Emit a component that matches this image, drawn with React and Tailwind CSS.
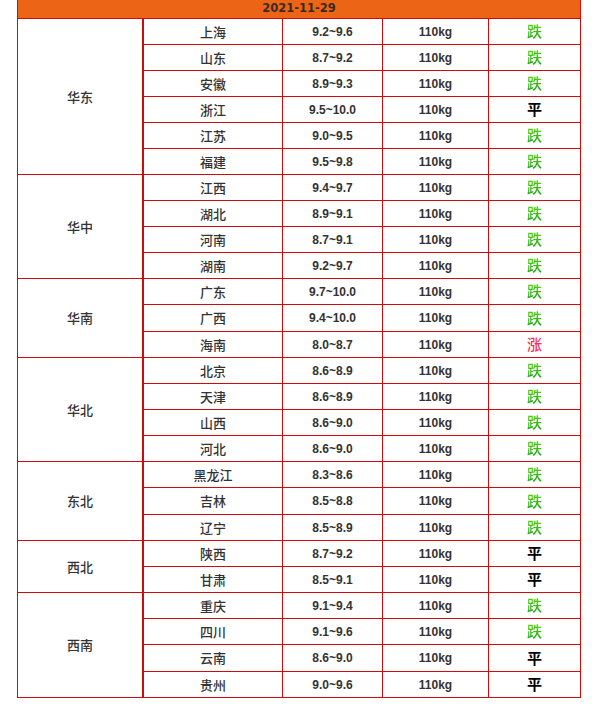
const groups = [
  { region: '华东', rows: [
    ['上海', '9.2~9.6', '跌'],
    ['山东', '8.7~9.2', '跌'],
    ['安徽', '8.9~9.3', '跌'],
    ['浙江', '9.5~10.0', '平'],
    ['江苏', '9.0~9.5', '跌'],
    ['福建', '9.5~9.8', '跌'],
  ] },
  { region: '华中', rows: [
    ['江西', '9.4~9.7', '跌'],
    ['湖北', '8.9~9.1', '跌'],
    ['河南', '8.7~9.1', '跌'],
    ['湖南', '9.2~9.7', '跌'],
  ] },
  { region: '华南', rows: [
    ['广东', '9.7~10.0', '跌'],
    ['广西', '9.4~10.0', '跌', true],
    ['海南', '8.0~8.7', '涨'],
  ] },
  { region: '华北', rows: [
    ['北京', '8.6~8.9', '跌'],
    ['天津', '8.6~8.9', '跌'],
    ['山西', '8.6~9.0', '跌'],
    ['河北', '8.6~9.0', '跌'],
  ] },
  { region: '东北', rows: [
    ['黑龙江', '8.3~8.6', '跌'],
    ['吉林', '8.5~8.8', '跌', true],
    ['辽宁', '8.5~8.9', '跌'],
  ] },
  { region: '西北', rows: [
    ['陕西', '8.7~9.2', '平'],
    ['甘肃', '8.5~9.1', '平'],
  ] },
  { region: '西南', rows: [
    ['重庆', '9.1~9.4', '跌'],
    ['四川', '9.1~9.6', '跌'],
    ['云南', '8.6~9.0', '平', true],
    ['贵州', '9.0~9.6', '平'],
  ] },
];

const cjk = "font-['Microsoft_YaHei','Noto_Sans_CJK_SC',sans-serif] font-medium";
const num = "font-['Liberation_Sans','Noto_Sans_CJK_SC',sans-serif]";
const cell = 'border-r border-b border-[#d10a0a] text-center align-middle p-0';

function Trend({ t }) {
  if (t === '跌') {
    return <span className="bg-gradient-to-b from-[#5ee000] to-[#049a1a] bg-clip-text text-transparent">跌</span>;
  }
  if (t === '涨') return <span className="text-[#f0325a]">涨</span>;
  return <span className="text-black font-bold">平</span>;
}

function Box({ children, tall, className }) {
  return <div className={`${tall ? 'h-[26px]' : 'h-[25px]'} flex items-center justify-center ${className}`}>{children}</div>;
}

export default function App() {
  return (
    <div className="bg-white w-[599px] h-[706px] pl-[17px]">
      <table className="w-[564px] table-fixed border-separate border-spacing-0">
        <colgroup>
          <col className="w-[127px]" />
          <col className="w-[139px]" />
          <col className="w-[100px]" />
          <col className="w-[106px]" />
          <col className="w-[92px]" />
        </colgroup>
        <tbody>
          <tr>
            <td colSpan={5} className="border-l border-r border-b border-[#d10a0a] bg-[#ec6517] p-0">
              <div className="h-[18px] flex items-center justify-center text-[11.5px] font-bold text-[#3a2a1a] font-['DejaVu_Sans',sans-serif]">
                2021-11-29
              </div>
            </td>
          </tr>
          {groups.map(g => g.rows.map((r, i) => (
            <tr key={g.region + r[0]}>
              {i === 0 && (
                <td rowSpan={g.rows.length} className={`${cell} border-l border-r-2 text-[13px] text-[#333] ${cjk}`}>{g.region}</td>
              )}
              <td className={cell}><Box tall={r[3]} className={`text-[13px] text-[#333] ${cjk}`}>{r[0]}</Box></td>
              <td className={cell}><Box tall={r[3]} className={`text-[12px] font-bold text-[#333] ${num}`}>{r[1]}</Box></td>
              <td className={cell}><Box tall={r[3]} className={`text-[12px] font-bold text-[#333] ${num}`}>110kg</Box></td>
              <td className={cell}><Box tall={r[3]} className={`text-[15px] ${cjk}`}><Trend t={r[2]} /></Box></td>
            </tr>
          )))}
        </tbody>
      </table>
    </div>
  );
}
